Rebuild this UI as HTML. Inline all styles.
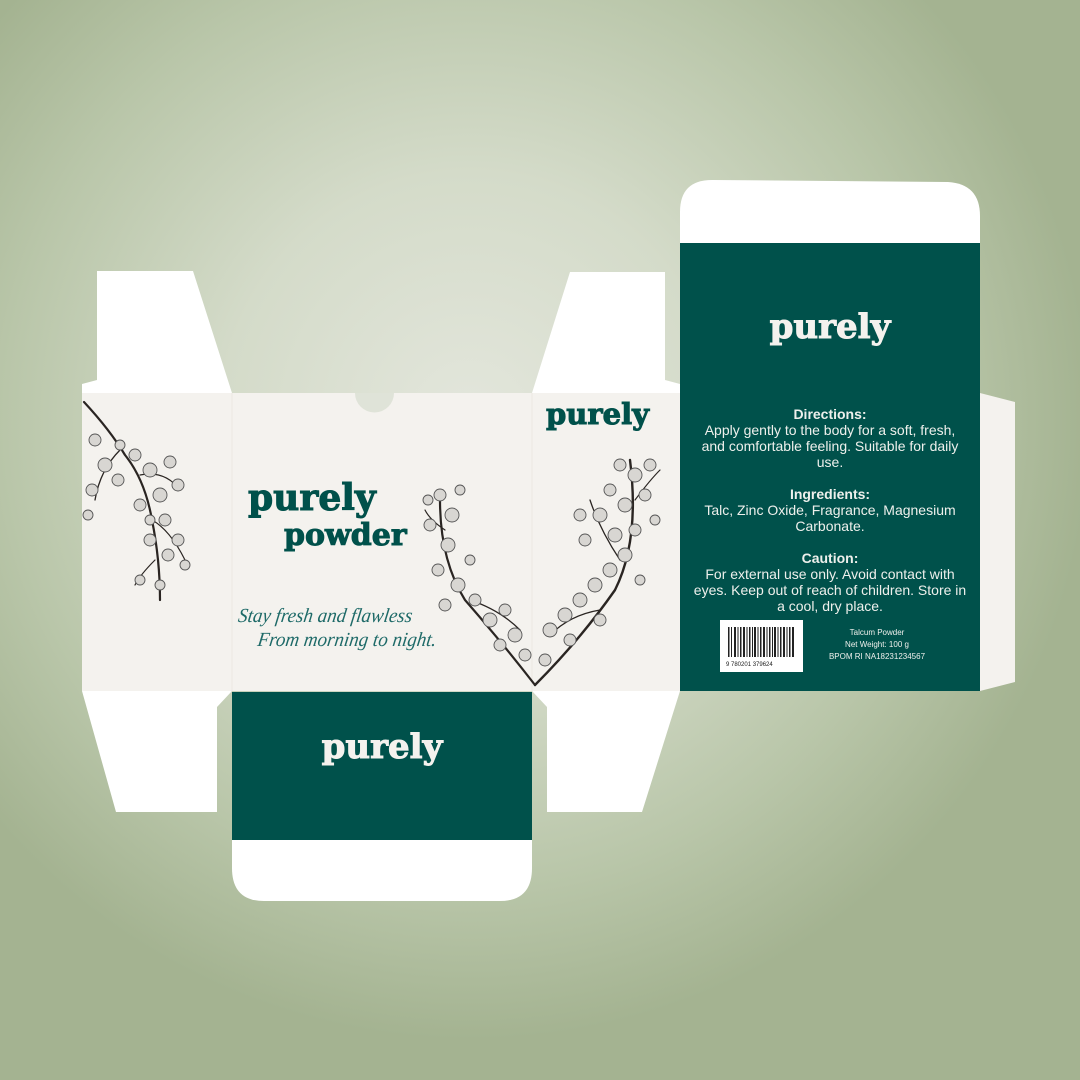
<!DOCTYPE html>
<html><head><meta charset="utf-8"><style>
html,body{margin:0;padding:0}
body{width:1080px;height:1080px;overflow:hidden;position:relative;
background:radial-gradient(ellipse 620px 620px at 470px 420px,#e3e6dc 0%,#d4dbc9 40%,#b9c6a9 75%,#a4b391 100%);}
.abs{position:absolute}
.logo{font-family:"DejaVu Serif",serif;font-weight:bold;line-height:1;-webkit-text-stroke:1px currentColor;white-space:nowrap}
.info{font-family:"Liberation Sans",sans-serif;color:#eef0ec;font-size:14px;line-height:16px;text-align:center}
.info b{font-weight:bold;font-size:14px}
</style></head><body>
<svg class="abs" style="left:0;top:0" width="1080" height="1080">
<polygon points="97,271 193,271 232,393 82,393 82,384 97,380" fill="#fff"/>
<polygon points="570,272 665,272 665,380 680,384 680,393 532,393" fill="#fff"/>
<polygon points="82,691 232,691 217,707 217,812 116,812" fill="#fff"/>
<polygon points="532,691 680,691 642,812 547,812 547,707" fill="#fff"/>
<rect x="82" y="393" width="598" height="298" fill="#f4f2ee"/>
<line x1="232" y1="393" x2="232" y2="691" stroke="#ebe8e2" stroke-width="1"/>
<line x1="532" y1="393" x2="532" y2="691" stroke="#ebe8e2" stroke-width="1"/>
<path d="M355,393 A19,19 0 0 0 394,393 Z" fill="#dfe3d8"/>
<polygon points="980,393 1015,402 1015,682 980,691" fill="#f4f2ee"/>
<path d="M680,244 L680,212 Q680,180 712,180 L948,182 Q980,184 980,216 L980,244 Z" fill="#fff"/>
<rect x="680" y="243" width="300" height="448" fill="#00514b"/>
<path d="M232,692 L532,692 L532,868 Q532,901 500,901 L264,901 Q232,901 232,868 Z" fill="#fff"/>
<rect x="232" y="692" width="300" height="148" fill="#00514b"/>
<rect x="720" y="620" width="83" height="52" fill="#fff"/>
<g fill="#222">
<rect x="728" y="627" width="1.5" height="30"/><rect x="731" y="627" width="1" height="30"/><rect x="734" y="627" width="2" height="30"/><rect x="737.5" y="627" width="1" height="30"/><rect x="740" y="627" width="1.5" height="30"/><rect x="743" y="627" width="2" height="30"/><rect x="746.5" y="627" width="1" height="30"/><rect x="749" y="627" width="1.5" height="30"/><rect x="752" y="627" width="1" height="30"/><rect x="754" y="627" width="2" height="30"/><rect x="757.5" y="627" width="1" height="30"/><rect x="760" y="627" width="1.5" height="30"/><rect x="763" y="627" width="2" height="30"/><rect x="766.5" y="627" width="1" height="30"/><rect x="769" y="627" width="1.5" height="30"/><rect x="772" y="627" width="1" height="30"/><rect x="774" y="627" width="2" height="30"/><rect x="777.5" y="627" width="1" height="30"/><rect x="780" y="627" width="1.5" height="30"/><rect x="783" y="627" width="2" height="30"/><rect x="786.5" y="627" width="1" height="30"/><rect x="789" y="627" width="1.5" height="30"/><rect x="792" y="627" width="2" height="30"/>
</g>
<text x="726" y="666" font-family="Liberation Sans" font-size="6" fill="#222">9 780201 379624</text>
<g stroke="#2a2522" fill="none" stroke-linecap="round">
<path d="M84,402 Q110,430 125,455 Q145,480 152,520 Q160,560 160,600" stroke-width="2.2"/>
<path d="M120,450 Q100,470 95,500" stroke-width="1.3"/>
<path d="M140,475 Q165,470 180,490" stroke-width="1.2"/>
<path d="M152,520 Q170,530 185,560" stroke-width="1.2"/>
<path d="M155,560 Q140,575 135,585" stroke-width="1.2"/>
</g>
<g fill="#d8d6d2" stroke="#555" stroke-width="0.9">
<circle cx="95" cy="440" r="6"/><circle cx="105" cy="465" r="7"/><circle cx="92" cy="490" r="6"/><circle cx="118" cy="480" r="6"/><circle cx="135" cy="455" r="6"/><circle cx="150" cy="470" r="7"/><circle cx="170" cy="462" r="6"/><circle cx="178" cy="485" r="6"/><circle cx="160" cy="495" r="7"/><circle cx="140" cy="505" r="6"/><circle cx="165" cy="520" r="6"/><circle cx="178" cy="540" r="6"/><circle cx="150" cy="540" r="6"/><circle cx="185" cy="565" r="5"/><circle cx="168" cy="555" r="6"/><circle cx="140" cy="580" r="5"/><circle cx="160" cy="585" r="5"/><circle cx="88" cy="515" r="5"/><circle cx="120" cy="445" r="5"/><circle cx="150" cy="520" r="5"/>
</g>
<g stroke="#2a2522" fill="none" stroke-linecap="round">
<path d="M535,685 Q500,640 465,600 Q440,560 440,500" stroke-width="2.2"/>
<path d="M535,685 Q580,640 615,590 Q640,540 630,460" stroke-width="2.4"/>
<path d="M470,600 Q500,610 520,630" stroke-width="1.3"/>
<path d="M600,610 Q570,615 550,635" stroke-width="1.3"/>
<path d="M620,560 Q600,530 590,500" stroke-width="1.3"/>
<path d="M445,530 Q430,520 425,510" stroke-width="1.2"/>
<path d="M635,500 Q650,480 660,470" stroke-width="1.2"/>
</g>
<g fill="#d8d6d2" stroke="#555" stroke-width="0.9">
<circle cx="440" cy="495" r="6"/><circle cx="452" cy="515" r="7"/><circle cx="430" cy="525" r="6"/><circle cx="448" cy="545" r="7"/><circle cx="438" cy="570" r="6"/><circle cx="458" cy="585" r="7"/><circle cx="445" cy="605" r="6"/><circle cx="475" cy="600" r="6"/><circle cx="490" cy="620" r="7"/><circle cx="505" cy="610" r="6"/><circle cx="515" cy="635" r="7"/><circle cx="500" cy="645" r="6"/><circle cx="525" cy="655" r="6"/><circle cx="550" cy="630" r="7"/><circle cx="565" cy="615" r="7"/><circle cx="580" cy="600" r="7"/><circle cx="595" cy="585" r="7"/><circle cx="610" cy="570" r="7"/><circle cx="625" cy="555" r="7"/><circle cx="615" cy="535" r="7"/><circle cx="635" cy="530" r="6"/><circle cx="600" cy="515" r="7"/><circle cx="625" cy="505" r="7"/><circle cx="645" cy="495" r="6"/><circle cx="610" cy="490" r="6"/><circle cx="635" cy="475" r="7"/><circle cx="620" cy="465" r="6"/><circle cx="650" cy="465" r="6"/><circle cx="585" cy="540" r="6"/><circle cx="580" cy="515" r="6"/><circle cx="600" cy="620" r="6"/><circle cx="570" cy="640" r="6"/><circle cx="545" cy="660" r="6"/><circle cx="470" cy="560" r="5"/><circle cx="460" cy="490" r="5"/><circle cx="428" cy="500" r="5"/><circle cx="655" cy="520" r="5"/><circle cx="640" cy="580" r="5"/>
</g>
</svg>

<div class="abs logo" style="left:248px;top:480px;font-size:36px;color:#00514b">purely</div>
<div class="abs logo" style="left:284px;top:521px;font-size:30px;color:#00514b">powder</div>
<div class="abs logo" style="left:546px;top:400px;font-size:29px;color:#00514b">purely</div>
<div class="abs logo" style="left:232px;width:300px;text-align:center;top:730px;font-size:34px;color:#f4f2ee">purely</div>
<div class="abs logo" style="left:680px;width:300px;text-align:center;top:310px;font-size:34px;color:#f4f2ee">purely</div>

<div class="abs" style="left:240px;top:604px;font-family:'Liberation Serif',serif;font-style:italic;font-size:20px;color:#1e6a68;line-height:24px;transform:skewX(-8deg) scaleX(0.95);transform-origin:left top;white-space:nowrap">Stay fresh and flawless<br><span style="padding-left:24px">From morning to night.</span></div>

<div class="abs info" style="left:692px;width:276px;top:406px">
<b>Directions:</b><br>Apply gently to the body for a soft, fresh, and comfortable feeling. Suitable for daily use.<br><br>
<b>Ingredients:</b><br>Talc, Zinc Oxide, Fragrance, Magnesium Carbonate.<br><br>
<b>Caution:</b><br>For external use only. Avoid contact with eyes. Keep out of reach of children. Store in a cool, dry place.
</div>
<div class="abs info" style="left:812px;width:130px;top:627px;font-size:8px;line-height:12px">Talcum Powder<br>Net Weight: 100 g<br>BPOM RI NA18231234567</div>
</body></html>
